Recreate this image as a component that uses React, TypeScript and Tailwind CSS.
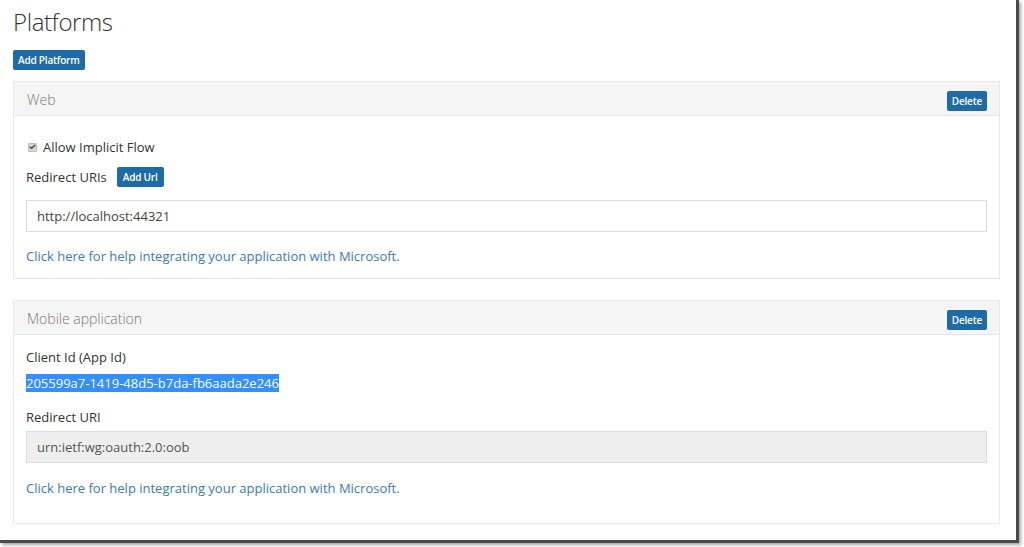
import { Check } from "lucide-react";

const font = { fontFamily: '"Open Sans", "Noto Sans", sans-serif' };

function BlueButton({ label, className = "" }: { label: string; className?: string }) {
  return (
    <button
      className={`h-[20px] px-[5px] rounded-[2px] bg-[#1d6ca7] text-white text-[10px] font-semibold leading-none tracking-[-0.2px] ${className}`}
    >
      {label}
    </button>
  );
}

function HelpLink() {
  return (
    <a className="text-[13px] leading-[18px] text-[#3a7bb4]" href="#">
      Click here for help integrating your application with Microsoft.
    </a>
  );
}

function Panel({
  title,
  children,
}: {
  title: string;
  children: React.ReactNode;
}) {
  return (
    <div className="w-[987px] border border-[#e8e8e8] bg-white">
      <div className="h-[34px] flex items-center justify-between pl-[13px] pr-[12px] bg-[#f5f5f5] border-b border-[#e6e6e6]">
        <span className="mt-[2px] text-[14px] leading-[18px] text-[#7a7a7a] font-light">{title}</span>
        <BlueButton label="Delete" className="mt-[5px]" />
      </div>
      <div className="px-[12px]">{children}</div>
    </div>
  );
}

export default function App() {
  return (
    <div className="w-[1024px] h-[547px] bg-white" style={font}>
      <div className="w-[1019px] h-[543px] border-r-[3px] border-b-[3px] border-[#4a4a4a] shadow-[2px_2px_3px_rgba(0,0,0,0.35)] pl-[13px]">
        <h1 className="pt-[8px] text-[24px] font-light text-[#333] leading-[28px] tracking-[-0.4px]">
          Platforms
        </h1>
        <BlueButton label="Add Platform" className="mt-[14px] h-[19px] px-[5px] block" />

        <div className="mt-[11px] flex flex-col gap-[21px]">
          <Panel title="Web">
            <div className="pt-[22px] h-[40px] flex items-center gap-[6px]">
              <span className="ml-[2px] w-[9px] h-[9px] rounded-[1px] bg-[#d6d6d6] border border-[#bdbdbd] flex items-center justify-center">
                <Check className="w-[8px] h-[8px] text-[#333]" strokeWidth={4} />
              </span>
              <span className="text-[13px] leading-[18px] text-[#333]">Allow Implicit Flow</span>
            </div>
            <div className="mt-[11px] h-[20px] flex items-center gap-[10px]">
              <span className="text-[13px] leading-[18px] text-[#333]">Redirect URIs</span>
              <BlueButton label="Add Url" className="px-[6px]" />
            </div>
            <div className="mt-[13px] h-[32px] w-[961px] border border-[#dcdcdc] flex items-center px-[10px] text-[13px] leading-[18px] text-[#444]">
              http://localhost:44321
            </div>
            <div className="mt-[15px] h-[18px] flex items-center">
              <HelpLink />
            </div>
            <div className="h-[13px]" />
          </Panel>

          <Panel title="Mobile application">
            <div className="pt-[13px] text-[13px] leading-[18px] text-[#333]">Client Id (App Id)</div>
            <div className="mt-[8px] h-[18px] leading-[18px] flex items-center">
              <span className="bg-[#3390ff] text-white text-[13px] leading-[18px]">
                205599a7-1419-48d5-b7da-fb6aada2e246
              </span>
            </div>
            <div className="mt-[16px] text-[13px] leading-[18px] text-[#333]">Redirect URI</div>
            <div className="mt-[5px] h-[32px] w-[961px] border border-[#dcdcdc] bg-[#eeeeee] flex items-center px-[10px] text-[13px] leading-[18px] text-[#555]">
              urn:ietf:wg:oauth:2.0:oob
            </div>
            <div className="mt-[16px] h-[18px] flex items-center">
              <HelpLink />
            </div>
            <div className="h-[26px]" />
          </Panel>
        </div>
      </div>
    </div>
  );
}
